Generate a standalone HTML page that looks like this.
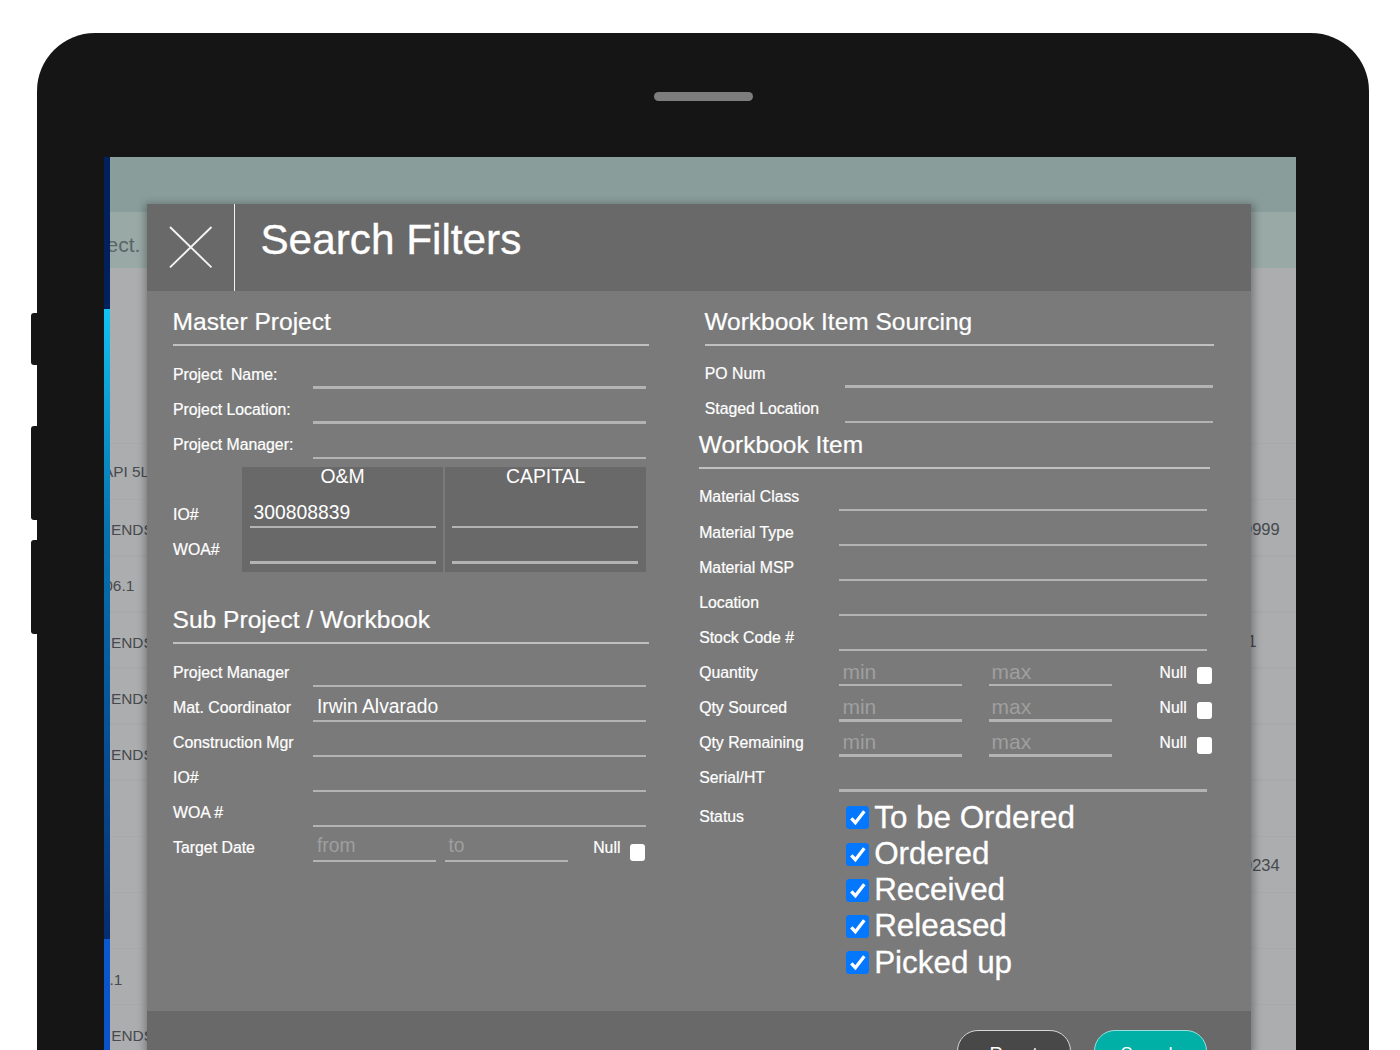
<!DOCTYPE html>
<html lang="en">
<head>
<meta charset="utf-8">
<title>Search Filters</title>
<style>
html,body{margin:0;padding:0;background:#fff;}
body{width:1400px;height:1050px;overflow:hidden;position:relative;font-family:"Liberation Sans",Arial,sans-serif;}
.b,.ln,.t{position:absolute;}
.t{line-height:1;white-space:nowrap;}
.ttl{-webkit-text-stroke:0.35px #fff;}
.st{-webkit-text-stroke:0.3px #fff;}
.lab{-webkit-text-stroke:0.22px #fff;}
#screen{position:absolute;left:0;top:0;width:1400px;height:1050px;clip-path:inset(157px 104px 0 104px);}
.cb{position:absolute;background:#fff;border-radius:3px;}
.ck{position:absolute;width:23px;height:23.2px;background:#0477ff;border-radius:3.5px;}
.ck svg{position:absolute;left:0;top:0;}
</style>
</head>
<body>
<div class="b" style="left:37.00px;top:33.00px;width:1332.00px;height:1167.00px;background:#151515;border-radius:58px;"></div>
<div class="b" style="left:30.50px;top:312.50px;width:9.50px;height:52.00px;background:#151515;border-radius:3px;"></div>
<div class="b" style="left:30.50px;top:425.50px;width:9.50px;height:94.50px;background:#151515;border-radius:3px;"></div>
<div class="b" style="left:30.50px;top:540.00px;width:9.50px;height:93.50px;background:#151515;border-radius:3px;"></div>
<div class="b" style="left:654.00px;top:92.00px;width:99.00px;height:9.00px;background:#7d7d7d;border-radius:4.5px;"></div>
<div id="screen">
<div class="b" style="left:104.00px;top:157.00px;width:1192.00px;height:55.10px;background:#899d9a;"></div>
<div class="b" style="left:104.00px;top:212.10px;width:1192.00px;height:55.50px;background:#99a9a6;"></div>
<div class="b" style="left:104.00px;top:267.60px;width:1192.00px;height:782.40px;background:#acadaf;"></div>
<div class="b" style="left:104.00px;top:442.80px;width:1192.00px;height:1.60px;background:#a8a9ab;"></div>
<div class="b" style="left:104.00px;top:498.90px;width:1192.00px;height:1.60px;background:#a8a9ab;"></div>
<div class="b" style="left:104.00px;top:555.00px;width:1192.00px;height:1.60px;background:#a8a9ab;"></div>
<div class="b" style="left:104.00px;top:611.10px;width:1192.00px;height:1.60px;background:#a8a9ab;"></div>
<div class="b" style="left:104.00px;top:667.20px;width:1192.00px;height:1.60px;background:#a8a9ab;"></div>
<div class="b" style="left:104.00px;top:723.30px;width:1192.00px;height:1.60px;background:#a8a9ab;"></div>
<div class="b" style="left:104.00px;top:779.40px;width:1192.00px;height:1.60px;background:#a8a9ab;"></div>
<div class="b" style="left:104.00px;top:835.50px;width:1192.00px;height:1.60px;background:#a8a9ab;"></div>
<div class="b" style="left:104.00px;top:891.60px;width:1192.00px;height:1.60px;background:#a8a9ab;"></div>
<div class="b" style="left:104.00px;top:947.70px;width:1192.00px;height:1.60px;background:#a8a9ab;"></div>
<div class="b" style="left:104.00px;top:1003.80px;width:1192.00px;height:1.60px;background:#a8a9ab;"></div>
<div class="t" style="left:106.60px;top:234.02px;font-size:21px;color:#586665;">ect.</div>
<div class="t" style="left:102.90px;top:464.16px;font-size:15.4px;color:#464a4e;">API 5L</div>
<div class="t" style="left:110.90px;top:522.36px;font-size:15.4px;color:#464a4e;">ENDS</div>
<div class="t" style="left:104.30px;top:577.76px;font-size:15.4px;color:#464a4e;">06.1</div>
<div class="t" style="left:110.90px;top:634.56px;font-size:15.4px;color:#464a4e;">ENDS</div>
<div class="t" style="left:110.90px;top:690.66px;font-size:15.4px;color:#464a4e;">ENDS</div>
<div class="t" style="left:110.90px;top:746.76px;font-size:15.4px;color:#464a4e;">ENDS</div>
<div class="t" style="left:109.60px;top:971.86px;font-size:15.4px;color:#464a4e;">.1</div>
<div class="t" style="left:111.20px;top:1028.16px;font-size:15.4px;color:#464a4e;">ENDS</div>
<div class="t" style="left:1243.00px;top:520.93px;font-size:16.5px;color:#464a4e;">9999</div>
<div class="t" style="left:1247.40px;top:632.93px;font-size:16.5px;color:#464a4e;">1</div>
<div class="t" style="left:1243.00px;top:857.43px;font-size:16.5px;color:#464a4e;">9234</div>
<div class="b" style="left:104.00px;top:157.00px;width:6.00px;height:893.00px;background:linear-gradient(#02205e 0,#02205e 151.7px,#12c2f0 151.7px,#0c9fd6 243px,#0873b0 368px,#06569c 543px,#07468c 643px,#062c70 781.5px,#0b58d0 782px,#0a52c8 100%);"></div>
<div class="b" style="left:147.00px;top:203.90px;width:1104.20px;height:846.10px;background:#7a7a7a;box-shadow:0 2px 8px 2.5px rgba(0,0,0,0.3);"></div>
<div class="b" style="left:147.00px;top:203.90px;width:1104.20px;height:86.80px;background:#696969;"></div>
<div class="b" style="left:147.00px;top:1010.50px;width:1104.20px;height:39.50px;background:#696969;"></div>
<div class="b" style="left:233.70px;top:203.90px;width:1.60px;height:86.80px;background:#f4f4f4;"></div>
<svg class="b" style="left:169px;top:225.6px" width="44" height="43" viewBox="0 0 44 43"><path d="M1 1 L42.5 41.4 M42.5 1 L1 41.4" stroke="#f4f4f4" stroke-width="1.9" fill="none"/></svg>
<div class="t ttl" style="left:260.40px;top:218.69px;font-size:42.3px;color:#fff;">Search Filters</div>
<div class="t lab" style="left:172.60px;top:310.22px;font-size:24.55px;color:#fff;">Master Project</div>
<div class="ln" style="left:173.00px;top:344.15px;width:475.60px;height:1.9px;background:#c0c0c0"></div>
<div class="t lab" style="left:173.00px;top:366.93px;font-size:15.8px;color:#fff;">Project&nbsp; Name:</div>
<div class="ln" style="left:313.00px;top:386.20px;width:332.70px;height:2.4px;background:#b3b3b3"></div>
<div class="t lab" style="left:173.00px;top:402.08px;font-size:15.8px;color:#fff;">Project Location:</div>
<div class="ln" style="left:313.00px;top:421.35px;width:332.70px;height:2.4px;background:#b3b3b3"></div>
<div class="t lab" style="left:173.00px;top:437.23px;font-size:15.8px;color:#fff;">Project Manager:</div>
<div class="ln" style="left:313.00px;top:456.50px;width:332.70px;height:2.4px;background:#b3b3b3"></div>
<div class="b" style="left:242.00px;top:466.80px;width:200.50px;height:105.20px;background:#696969;"></div>
<div class="b" style="left:445.00px;top:466.80px;width:200.70px;height:105.20px;background:#696969;"></div>
<div class="t" style="left:142.50px;width:400px;text-align:center;top:466.78px;font-size:19.4px;color:#fff;">O&amp;M</div>
<div class="t" style="left:345.70px;width:400px;text-align:center;top:466.78px;font-size:19.4px;color:#fff;">CAPITAL</div>
<div class="t lab" style="left:173.00px;top:506.93px;font-size:15.8px;color:#fff;">IO#</div>
<div class="t lab" style="left:173.00px;top:541.93px;font-size:15.8px;color:#fff;">WOA#</div>
<div class="t" style="left:253.60px;top:503.26px;font-size:19.3px;color:#fff;">300808839</div>
<div class="ln" style="left:250.00px;top:526.00px;width:185.70px;height:2.4px;background:#b3b3b3"></div>
<div class="ln" style="left:452.00px;top:526.00px;width:185.90px;height:2.4px;background:#b3b3b3"></div>
<div class="ln" style="left:250.00px;top:561.30px;width:185.70px;height:2.4px;background:#b3b3b3"></div>
<div class="ln" style="left:452.00px;top:561.30px;width:185.90px;height:2.4px;background:#b3b3b3"></div>
<div class="t lab" style="left:172.60px;top:607.72px;font-size:24.55px;color:#fff;">Sub Project / Workbook</div>
<div class="ln" style="left:173.00px;top:642.05px;width:475.60px;height:1.9px;background:#c0c0c0"></div>
<div class="t lab" style="left:173.00px;top:665.18px;font-size:15.85px;color:#fff;">Project Manager</div>
<div class="ln" style="left:313.00px;top:685.00px;width:332.70px;height:2.4px;background:#b3b3b3"></div>
<div class="t lab" style="left:173.00px;top:700.18px;font-size:15.85px;color:#fff;">Mat. Coordinator</div>
<div class="ln" style="left:313.00px;top:720.00px;width:332.70px;height:2.4px;background:#b3b3b3"></div>
<div class="t lab" style="left:173.00px;top:735.18px;font-size:15.85px;color:#fff;">Construction Mgr</div>
<div class="ln" style="left:313.00px;top:755.00px;width:332.70px;height:2.4px;background:#b3b3b3"></div>
<div class="t lab" style="left:173.00px;top:770.18px;font-size:15.85px;color:#fff;">IO#</div>
<div class="ln" style="left:313.00px;top:790.00px;width:332.70px;height:2.4px;background:#b3b3b3"></div>
<div class="t lab" style="left:173.00px;top:805.18px;font-size:15.85px;color:#fff;">WOA #</div>
<div class="ln" style="left:313.00px;top:825.00px;width:332.70px;height:2.4px;background:#b3b3b3"></div>
<div class="t lab" style="left:173.00px;top:840.18px;font-size:15.85px;color:#fff;">Target Date</div>
<div class="t" style="left:317.00px;top:697.16px;font-size:19.3px;color:#fff;">Irwin Alvarado</div>
<div class="ln" style="left:313.00px;top:860.00px;width:122.70px;height:2.4px;background:#b3b3b3"></div>
<div class="ln" style="left:445.00px;top:860.00px;width:122.90px;height:2.4px;background:#b3b3b3"></div>
<div class="t" style="left:317.00px;top:836.26px;font-size:19.3px;color:#9f9f9f;">from</div>
<div class="t" style="left:448.50px;top:836.26px;font-size:19.3px;color:#9f9f9f;">to</div>
<div class="t lab" style="left:593.20px;top:840.13px;font-size:15.8px;color:#fff;">Null</div>
<div class="cb" style="left:630.40px;top:843.90px;width:14.60px;height:16.80px;"></div>
<div class="t lab" style="left:704.40px;top:309.66px;font-size:24.5px;color:#fff;">Workbook Item Sourcing</div>
<div class="ln" style="left:704.80px;top:343.65px;width:509.20px;height:1.9px;background:#c0c0c0"></div>
<div class="t lab" style="left:704.80px;top:366.03px;font-size:15.8px;color:#fff;">PO Num</div>
<div class="ln" style="left:845.20px;top:385.40px;width:368.00px;height:2.4px;background:#b3b3b3"></div>
<div class="t lab" style="left:704.80px;top:401.23px;font-size:15.8px;color:#fff;">Staged Location</div>
<div class="ln" style="left:845.20px;top:420.60px;width:368.00px;height:2.4px;background:#b3b3b3"></div>
<div class="t lab" style="left:698.80px;top:433.26px;font-size:24.5px;color:#fff;">Workbook Item</div>
<div class="ln" style="left:699.20px;top:466.85px;width:510.80px;height:1.9px;background:#c0c0c0"></div>
<div class="t lab" style="left:699.20px;top:489.43px;font-size:15.8px;color:#fff;">Material Class</div>
<div class="ln" style="left:839.20px;top:508.60px;width:368.00px;height:2.4px;background:#b3b3b3"></div>
<div class="t lab" style="left:699.20px;top:524.53px;font-size:15.8px;color:#fff;">Material Type</div>
<div class="ln" style="left:839.20px;top:543.70px;width:368.00px;height:2.4px;background:#b3b3b3"></div>
<div class="t lab" style="left:699.20px;top:559.63px;font-size:15.8px;color:#fff;">Material MSP</div>
<div class="ln" style="left:839.20px;top:578.80px;width:368.00px;height:2.4px;background:#b3b3b3"></div>
<div class="t lab" style="left:699.20px;top:594.73px;font-size:15.8px;color:#fff;">Location</div>
<div class="ln" style="left:839.20px;top:613.90px;width:368.00px;height:2.4px;background:#b3b3b3"></div>
<div class="t lab" style="left:699.20px;top:629.83px;font-size:15.8px;color:#fff;">Stock Code #</div>
<div class="ln" style="left:839.20px;top:649.00px;width:368.00px;height:2.4px;background:#b3b3b3"></div>
<div class="t lab" style="left:699.20px;top:664.93px;font-size:15.8px;color:#fff;">Quantity</div>
<div class="ln" style="left:839.20px;top:684.10px;width:122.80px;height:2.4px;background:#b3b3b3"></div>
<div class="ln" style="left:988.80px;top:684.10px;width:122.80px;height:2.4px;background:#b3b3b3"></div>
<div class="t" style="left:842.40px;top:661.12px;font-size:21px;color:#9f9f9f;">min</div>
<div class="t" style="left:991.60px;top:661.12px;font-size:21px;color:#9f9f9f;">max</div>
<div class="t lab" style="left:1159.60px;top:664.81px;font-size:15.7px;color:#fff;">Null</div>
<div class="cb" style="left:1197.20px;top:666.50px;width:14.80px;height:17.40px;"></div>
<div class="t lab" style="left:699.20px;top:700.03px;font-size:15.8px;color:#fff;">Qty Sourced</div>
<div class="ln" style="left:839.20px;top:719.20px;width:122.80px;height:2.4px;background:#b3b3b3"></div>
<div class="ln" style="left:988.80px;top:719.20px;width:122.80px;height:2.4px;background:#b3b3b3"></div>
<div class="t" style="left:842.40px;top:696.22px;font-size:21px;color:#9f9f9f;">min</div>
<div class="t" style="left:991.60px;top:696.22px;font-size:21px;color:#9f9f9f;">max</div>
<div class="t lab" style="left:1159.60px;top:699.91px;font-size:15.7px;color:#fff;">Null</div>
<div class="cb" style="left:1197.20px;top:701.60px;width:14.80px;height:17.40px;"></div>
<div class="t lab" style="left:699.20px;top:735.13px;font-size:15.8px;color:#fff;">Qty Remaining</div>
<div class="ln" style="left:839.20px;top:754.30px;width:122.80px;height:2.4px;background:#b3b3b3"></div>
<div class="ln" style="left:988.80px;top:754.30px;width:122.80px;height:2.4px;background:#b3b3b3"></div>
<div class="t" style="left:842.40px;top:731.32px;font-size:21px;color:#9f9f9f;">min</div>
<div class="t" style="left:991.60px;top:731.32px;font-size:21px;color:#9f9f9f;">max</div>
<div class="t lab" style="left:1159.60px;top:735.01px;font-size:15.7px;color:#fff;">Null</div>
<div class="cb" style="left:1197.20px;top:736.70px;width:14.80px;height:17.40px;"></div>
<div class="t lab" style="left:699.20px;top:770.23px;font-size:15.8px;color:#fff;">Serial/HT</div>
<div class="ln" style="left:839.20px;top:789.40px;width:368.00px;height:2.4px;background:#b3b3b3"></div>
<div class="t lab" style="left:699.20px;top:808.53px;font-size:15.8px;color:#fff;">Status</div>
<div class="ck" style="left:845.9px;top:806.30px"><svg width="23" height="23.2" viewBox="0 0 23 23.2"><path d="M5.3 12.3 L9.4 16.7 L18.3 5.3" stroke="#fff" stroke-width="3.3" fill="none"/></svg></div>
<div class="t st" style="left:874.20px;top:801.62px;font-size:31.4px;color:#fff;">To be Ordered</div>
<div class="ck" style="left:845.9px;top:842.55px"><svg width="23" height="23.2" viewBox="0 0 23 23.2"><path d="M5.3 12.3 L9.4 16.7 L18.3 5.3" stroke="#fff" stroke-width="3.3" fill="none"/></svg></div>
<div class="t st" style="left:874.20px;top:837.87px;font-size:31.4px;color:#fff;">Ordered</div>
<div class="ck" style="left:845.9px;top:878.80px"><svg width="23" height="23.2" viewBox="0 0 23 23.2"><path d="M5.3 12.3 L9.4 16.7 L18.3 5.3" stroke="#fff" stroke-width="3.3" fill="none"/></svg></div>
<div class="t st" style="left:874.20px;top:874.12px;font-size:31.4px;color:#fff;">Received</div>
<div class="ck" style="left:845.9px;top:915.05px"><svg width="23" height="23.2" viewBox="0 0 23 23.2"><path d="M5.3 12.3 L9.4 16.7 L18.3 5.3" stroke="#fff" stroke-width="3.3" fill="none"/></svg></div>
<div class="t st" style="left:874.20px;top:910.37px;font-size:31.4px;color:#fff;">Released</div>
<div class="ck" style="left:845.9px;top:951.30px"><svg width="23" height="23.2" viewBox="0 0 23 23.2"><path d="M5.3 12.3 L9.4 16.7 L18.3 5.3" stroke="#fff" stroke-width="3.3" fill="none"/></svg></div>
<div class="t st" style="left:874.20px;top:946.62px;font-size:31.4px;color:#fff;">Picked up</div>
<div class="b" style="left:957.00px;top:1030.00px;width:114.00px;height:47.00px;background:#484848;border:1.6px solid #d6d6d6;border-radius:21px;box-sizing:border-box;"></div>
<div class="b" style="left:1093.60px;top:1030.00px;width:113.20px;height:47.00px;background:#00b0a7;border:1.6px solid #9adfda;border-radius:21px;box-sizing:border-box;"></div>
<div class="t" style="left:813.60px;width:400px;text-align:center;top:1044.72px;font-size:18.4px;color:#fff;">Reset</div>
<div class="t" style="left:949.60px;width:400px;text-align:center;top:1044.72px;font-size:18.4px;color:#fff;">Search</div>
</div>
</body>
</html>
